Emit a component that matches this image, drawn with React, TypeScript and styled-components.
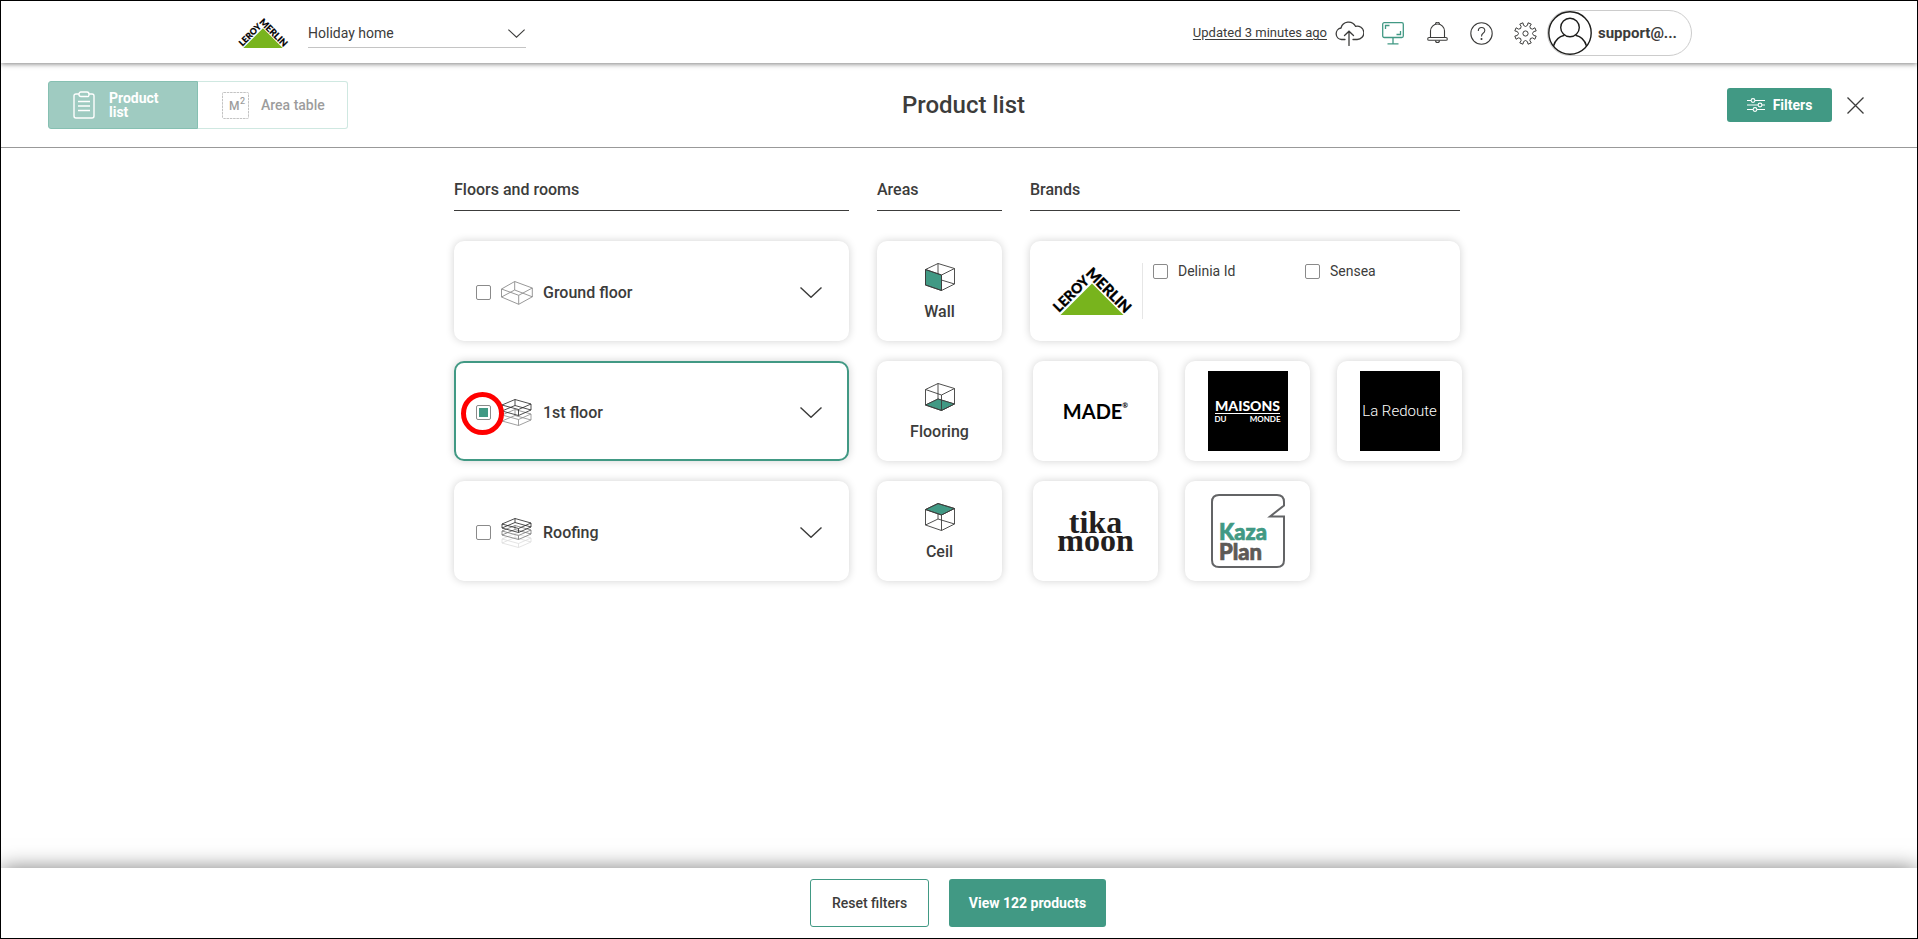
import React, { useState } from 'react';
import styled, { createGlobalStyle } from 'styled-components';

const teal = '#419984';
const ink = '#3c3c3b';
const sans = "Roboto, 'Liberation Sans', sans-serif";

const GlobalStyle = createGlobalStyle`
  *, *::before, *::after { box-sizing: border-box; }
  body { margin: 0; background: #fff; color: ${ink}; font-family: ${sans}; font-size: 16px; }
  button, select, input { font-family: inherit; color: inherit; margin: 0; }
  button { padding: 0; border: 0; background: none; cursor: pointer; }
  svg { display: block; flex: none; }
`;

const Page = styled.div`
  display: flex;
  flex-direction: column;
  min-height: 100vh;
  border: 1px solid #000;
  overflow: hidden;
`;

const TopBar = styled.header`
  height: 62px;
  box-shadow: 0 1px 5px rgba(0, 0, 0, 0.5);
`;

const TopBarInner = styled.div`
  display: flex;
  align-items: center;
  justify-content: space-between;
  max-width: 1466px;
  height: 64px;
  margin: 0 auto;
  padding-left: 12px;
`;

const TopGroup = styled.div`
  display: flex;
  align-items: center;
`;

const ProjectPicker = styled.label`
  position: relative;
  display: block;
  width: 218px;
  margin-left: 20px;

  svg { position: absolute; right: 1px; top: 11px; pointer-events: none; }
`;

const ProjectSelect = styled.select`
  appearance: none;
  display: block;
  width: 100%;
  height: 30px;
  padding: 0;
  border: 0;
  border-bottom: 1px solid #c4c4c4;
  border-radius: 0;
  background: none;
  font-size: 14px;
`;

const SyncLink = styled.a`
  color: ${ink};
  font-size: 13px;
  line-height: 16px;
  text-underline-offset: 2px;
`;

const IconButton = styled.button`
  display: flex;
  align-items: center;
  justify-content: center;
  width: 44px;
  height: 44px;
`;

const UserPill = styled.button`
  display: flex;
  align-items: center;
  gap: 6px;
  width: 145px;
  height: 46px;
  border: 1px solid #ccc;
  border-radius: 23px;
  font-size: 15px;
  font-weight: 700;
`;

const SubBar = styled.div`
  display: grid;
  grid-template-columns: 1fr auto 1fr;
  align-items: center;
  height: 85px;
  padding: 0 38px 0 47px;
  border-bottom: 1px solid #999;
`;

const Tabs = styled.div`
  display: grid;
  grid-template-columns: 1fr 1fr;
  width: 300px;
  height: 48px;
  opacity: 0.5;
`;

const Tab = styled.button<{ $active?: boolean }>`
  display: flex;
  align-items: center;
  gap: ${(p) => (p.$active ? 14 : 12)}px;
  padding-left: 24px;
  border: 1px solid ${(p) => (p.$active ? '#0f8268' : '#a0d2c5')};
  border-radius: ${(p) => (p.$active ? '3px 0 0 3px' : '0 3px 3px 0')};
  border-left-width: ${(p) => (p.$active ? 1 : 0)}px;
  background: ${(p) => (p.$active ? teal : '#fff')};
  color: ${(p) => (p.$active ? '#fff' : ink)};
  font-size: 14px;
  font-weight: ${(p) => (p.$active ? 700 : 500)};
  line-height: 14px;
  text-align: left;

  span { max-width: ${(p) => (p.$active ? 56 : 80)}px; }
`;

const Title = styled.h1`
  margin: 0;
  font-size: 24px;
  font-weight: 500;
  line-height: 32px;
`;

const SubActions = styled.div`
  display: flex;
  align-items: center;
  justify-content: flex-end;
`;

const SolidButton = styled.button<{ $small?: boolean }>`
  display: flex;
  align-items: center;
  justify-content: center;
  gap: 8px;
  width: ${(p) => (p.$small ? 105 : 157)}px;
  height: ${(p) => (p.$small ? 34 : 48)}px;
  border-radius: 3px;
  background: ${teal};
  color: #fff;
  font-size: 14px;
  font-weight: 700;
`;

const OutlineButton = styled.button`
  width: 119px;
  height: 48px;
  border: 1px solid ${teal};
  border-radius: 3px;
  background: #fff;
  font-size: 14px;
  font-weight: 500;
`;

const CloseButton = styled(IconButton)`
  width: 47px;
`;

const Content = styled.main`
  display: grid;
  grid-template-columns: minmax(0, 395px) 125px minmax(0, 430px);
  column-gap: 28px;
  justify-content: center;
  align-content: start;
  flex: 1;
  padding: 30px 4px 30px 0;
`;

const Column = styled.section`
  display: flex;
  flex-direction: column;
  gap: 20px;
`;

const ColumnTitle = styled.h2`
  margin: 0 0 10px;
  padding-bottom: 9px;
  border-bottom: 1px solid ${ink};
  font-size: 16px;
  font-weight: 500;
  line-height: 23px;
`;

const Card = styled.div<{ $selected?: boolean }>`
  position: relative;
  display: flex;
  align-items: center;
  height: 100px;
  border: 2px solid ${(p) => (p.$selected ? teal : '#fff')};
  border-radius: 10px;
  background: #fff;
  box-shadow: 0 0 8px rgba(0, 0, 0, 0.18);
`;

const FloorCard = styled(Card)`
  justify-content: space-between;
  padding: 3px 14px 0 20px;
`;

const FloorLabel = styled.label`
  display: flex;
  align-items: center;
  gap: 10px;
  font-weight: 500;
  line-height: 24px;
`;

const Checkbox = styled.input.attrs({ type: 'checkbox' })`
  appearance: none;
  flex: none;
  width: 15px;
  height: 15px;
  padding: 2px;
  border: 1px solid #8a8a8a;
  border-radius: 2px;
  background: #fff;

  &:checked {
    background: ${teal} content-box;
  }
`;

const Highlight = styled.div`
  position: absolute;
  left: 5px;
  top: 29px;
  width: 43px;
  height: 43px;
  border: 5px solid #f00;
  border-radius: 50%;
  pointer-events: none;
`;

const AreaCard = styled(Card).attrs({ as: 'button' })`
  flex-direction: column;
  gap: 9px;
  padding-top: 20px;
  font-size: 16px;
  font-weight: 500;
  line-height: 24px;
`;

const OwnBrandCard = styled(Card)`
  padding: 0 20px;
`;

const OwnBrands = styled.div`
  display: grid;
  grid-template-columns: 152px 1fr;
  flex: 1;
  align-items: start;
  height: 56px;
  margin-left: 10px;
  padding-left: 10px;
  border-left: 1px solid #e6e6e6;

  label { display: flex; align-items: center; gap: 10px; font-size: 14px; line-height: 16px; }
`;

const BrandGrid = styled.div`
  display: grid;
  grid-template-columns: repeat(3, 125px);
  gap: 20px 27px;
  margin-left: 3px;
`;

const BrandCard = styled(Card).attrs({ as: 'button' })`
  justify-content: center;
`;

const MadeMark = styled.span`
  display: flex;
  color: #000;
  font: 700 20px/24px Lato, sans-serif;

  sup { font-size: 7px; line-height: 12px; }
`;

const BlackSquare = styled.span`
  display: flex;
  flex-direction: column;
  align-items: center;
  justify-content: center;
  width: 80px;
  height: 80px;
  background: #000;
  color: #fff;
`;

const MaisonsTop = styled.span`
  border-bottom: 1px solid #fff;
  font: 900 14px/15px Lato, sans-serif;
`;

const MaisonsBottom = styled.span`
  display: flex;
  justify-content: space-between;
  width: 66px;
  font: 700 8px/10px Lato, sans-serif;
`;

const RedouteMark = styled.span`
  font: 300 15px/20px Roboto, sans-serif;
`;

const TikaMark = styled.span`
  color: #231f20;
  font: 700 32px/18px 'Liberation Serif', serif;
  text-align: center;
  white-space: pre-line;
`;

const Footer = styled.footer`
  display: flex;
  align-items: center;
  justify-content: center;
  gap: 20px;
  height: 70px;
  padding-right: 2px;
  background: #fff;
  box-shadow: 0 0 20px rgba(0, 0, 0, 0.5);
`;

const Chevron = ({ width, height, color = ink }: { width: number; height: number; color?: string }) => (
  <svg width={width} height={height} viewBox="0 0 22 11" fill="none" stroke={color} strokeWidth="1.4" aria-hidden>
    <path d="M.5.5 11 10.3 21.5.5" />
  </svg>
);

const LeroyMerlin = ({ width }: { width: number }) => (
  <svg width={width} height={(width * 48) / 80} viewBox="0 0 80 48" overflow="visible" role="img" aria-label="Leroy Merlin">
    <path d="M8.500 48 40 16.500 71.500 48Z" fill="#78b41d" />
    <g fontFamily="Lato, sans-serif" fontWeight="900" fontSize="14" fill="#000" stroke="#000" strokeWidth=".3">
      <text transform="translate(7 46) rotate(-45)">LEROY</text>
      <text transform="translate(33 7) rotate(45)" fontSize="15">MERLIN</text>
    </g>
  </svg>
);

type StoreyProps = { y: number; drop: number; color: string };

const Storey = ({ y, drop, color }: StoreyProps) => (
  <g transform={`translate(1 ${y})`} stroke={color}>
    <path d="M0 6 13 .5 29 5 16.500 10.500Z" />
    <path d={`M0 ${6 + drop} 13 ${0.5 + drop} 29 ${5 + drop} 16.500 ${10.5 + drop}Z`} />
    <path d={`M0 6v${drop}M13 .5v${drop}M29 5v${drop}M16.500 10.500v${drop}`} />
  </g>
);

const floorIcons: Record<string, React.ReactNode> = {
  ground: (
    <svg width="32" height="24" viewBox="0 0 32 24" fill="none" stroke="#8c8c8c" strokeWidth=".9">
      <path d="M.5 8 13.700.5 31.300 7 17.700 14.300ZM.5 16 13.700 9 31.300 15.800 17.700 23.300ZM.5 8v8M13.700.5V9M31.300 7v9M17.700 14.300v9" />
    </svg>
  ),
  first: (
    <svg width="32" height="28" viewBox="0 0 32 28" fill="none" strokeWidth=".8">
      <Storey y={10} drop={6} color="#888" />
      <Storey y={0} drop={6} color="#222" />
    </svg>
  ),
  roof: (
    <svg width="32" height="30" viewBox="0 0 32 30" fill="none" strokeWidth=".8">
      <Storey y={15} drop={4} color="#ddd" />
      <Storey y={7} drop={4} color="#777" />
      <Storey y={0} drop={4} color="#222" />
    </svg>
  ),
};

const cubeFaces: Record<string, string> = {
  Wall: 'M.5 6.500 16.500 12v15.500L.5 22Z',
  Flooring: 'M.5 22 13 16 29.500 21 16.500 27.500Z',
  Ceil: 'M.5 6.500 13 .5 29.500 5.500 16.500 12Z',
};

const Cube = ({ face }: { face: string }) => (
  <svg width="30" height="28" viewBox="0 0 30 28" fill="none" stroke={ink} strokeWidth=".9" aria-hidden>
    <path d="M.5 22 13 16 29.500 21M13 .5V16" />
    <path d={cubeFaces[face]} fill={teal} />
    <path d="M.5 6.500 13 .5 29.500 5.500 16.500 12ZM.5 6.500V22L16.500 27.500 29.500 21V5.500M16.500 12v15.500" />
  </svg>
);

const KazaPlan = () => (
  <svg width="74" height="74" viewBox="0 0 74 74" role="img" aria-label="Kaza Plan">
    <path
      d="M73 11.500V8Q73 1 66 1H8Q1 1 1 8v58q0 7 7 7h58q7 0 7-7V22.500H59Z"
      fill="none"
      stroke="#636466"
      strokeWidth="2"
    />
    <g fontFamily="Lato, sans-serif" fontWeight="900" fontSize="22" strokeWidth=".7">
      <text x="8" y="46" fill={teal} stroke={teal}>Kaza</text>
      <text x="8" y="66" fill="#5d5a57" stroke="#5d5a57">Plan</text>
    </g>
  </svg>
);

const ClipboardIcon = () => (
  <svg width="22" height="28" viewBox="0 0 22 28" fill="none" stroke="#fff" strokeWidth="1.400" aria-hidden>
    <path d="M6 3H3Q1 3 1 5v20q0 2 2 2h16q2 0 2-2V5q0-2-2-2h-3" />
    <path d="M6 3.500Q6 1 8 1h6q2 0 2 2.500T14 5.500H8Q6 5.500 6 3.500ZM5 10.500h12M5 15h12M5 19.500h12" />
  </svg>
);

const AreaIcon = () => (
  <svg width="27" height="27" viewBox="0 0 27 27" fill="none" aria-hidden>
    <rect x=".5" y=".5" width="26" height="26" rx="1" stroke="#888" strokeDasharray="2.500 .8" />
    <g fontFamily="Roboto, sans-serif" fill={ink}>
      <text x="7" y="18" fontSize="12" fontWeight="500">M</text>
      <text x="18" y="12" fontSize="9">2</text>
    </g>
  </svg>
);

const CloudIcon = () => (
  <svg width="29" height="26" viewBox="0 0 29 26" fill="none" stroke={ink} strokeWidth="1.300" strokeLinecap="round" aria-hidden>
    <path d="M10 19.500H6.500A5.800 5.800 0 0 1 6 8 7.800 7.800 0 0 1 20.500 6.300 6.700 6.700 0 1 1 22 19.500h-4" />
    <path d="M14 25.500V11.500M9.500 15.500 14 11.200l4.500 4.300" />
  </svg>
);

const MonitorIcon = () => (
  <svg width="22" height="23" viewBox="0 0 22 23" fill="none" stroke={teal} strokeWidth="1.300" aria-hidden>
    <rect x=".7" y=".7" width="20.600" height="14.800" rx="1.500" />
    <path d="M3.500 7V3.500H7.500M18.500 9v3.500H14.500M11 15.500v6M5.500 21.800h11" />
  </svg>
);

const BellIcon = () => (
  <svg width="21" height="22" viewBox="0 0 21 22" fill="none" stroke={ink} strokeWidth="1.100" aria-hidden>
    <path d="M3.500 15.500V9a7 7 0 0 1 14 0v6.500M8.500 2.300a2 2 0 0 1 4 0M8.500 18.500a2 2 0 0 0 4 0" />
    <rect x=".7" y="15.500" width="19.600" height="2.800" rx="1.400" />
  </svg>
);

const HelpIcon = () => (
  <svg width="23" height="23" viewBox="0 0 23 23" fill="none" stroke={ink} strokeWidth="1.100" aria-hidden>
    <circle cx="11.500" cy="11.500" r="10.700" />
    <path d="M8.300 9q0-3.500 3.300-3.500T14.800 8.600q0 1.600-1.700 2.700-1.600 1.100-1.600 3.200" />
    <circle cx="11.500" cy="17" r=".5" fill={ink} />
  </svg>
);

const gearPath = (() => {
  const parts: string[] = [];
  const point = (r: number, deg: number) => {
    const a = (deg * Math.PI) / 180;
    return `${(11.5 + r * Math.cos(a)).toFixed(2)} ${(11.5 + r * Math.sin(a)).toFixed(2)}`;
  };
  for (let i = 0; i < 8; i += 1) {
    const a = i * 45 + 22.5;
    parts.push(`${i ? 'L' : 'M'}${point(11, a - 9)}L${point(11, a + 9)}L${point(8.4, a + 9)}`);
    parts.push(`Q${point(5.8, a + 22.5)} ${point(8.4, a + 36)}`);
  }
  return `${parts.join('')}Z`;
})();

const GearIcon = () => (
  <svg width="23" height="23" viewBox="0 0 23 23" fill="none" stroke={ink} strokeWidth="1" strokeLinejoin="round" aria-hidden>
    <path d={gearPath} />
    <circle cx="11.500" cy="11.500" r="2.600" />
  </svg>
);

const AvatarIcon = () => (
  <svg width="44" height="44" viewBox="0 0 44 44" fill="none" stroke="#1d1d1b" strokeWidth="1.400" aria-hidden>
    <circle cx="22" cy="22" r="21.200" />
    <circle cx="22" cy="16.500" r="9.300" />
    <path d="M5.500 35Q8 26 16.500 24.200M38.500 35Q36 26 27.500 24.200" />
  </svg>
);

const SlidersIcon = () => (
  <svg width="18" height="14" viewBox="0 0 18 14" fill="none" stroke="#fff" strokeWidth="1.100" aria-hidden>
    <path d="M0 2.500h4M8 2.500h10M0 7h11M15 7h3M0 11.500h6M10 11.500h8" />
    <circle cx="6" cy="2.500" r="1.900" />
    <circle cx="13" cy="7" r="1.900" />
    <circle cx="8" cy="11.500" r="1.900" />
  </svg>
);

const CloseIcon = () => (
  <svg width="17" height="17" viewBox="0 0 17 17" stroke={ink} strokeWidth="1.300" aria-hidden>
    <path d="M.5.5l16 16M16.500.5l-16 16" />
  </svg>
);

const floors = [
  { id: 'ground', name: 'Ground floor' },
  { id: 'first', name: '1st floor' },
  { id: 'roof', name: 'Roofing' },
];

export default function App() {
  const [selected, setSelected] = useState<string[]>(['first']);
  const toggle = (id: string) =>
    setSelected((now) => (now.includes(id) ? now.filter((x) => x !== id) : [...now, id]));

  return (
    <Page>
      <GlobalStyle />
      <TopBar>
        <TopBarInner>
          <TopGroup>
            <LeroyMerlin width={50} />
            <ProjectPicker>
              <ProjectSelect aria-label="Project">
                <option>Holiday home</option>
              </ProjectSelect>
              <Chevron width={17} height={9} />
            </ProjectPicker>
          </TopGroup>
          <TopGroup>
            <SyncLink href="#sync">Updated 3 minutes ago</SyncLink>
            <IconButton aria-label="Upload"><CloudIcon /></IconButton>
            <IconButton aria-label="Present"><MonitorIcon /></IconButton>
            <IconButton aria-label="Notifications"><BellIcon /></IconButton>
            <IconButton aria-label="Help"><HelpIcon /></IconButton>
            <IconButton aria-label="Settings"><GearIcon /></IconButton>
            <UserPill>
              <AvatarIcon />
              support@...
            </UserPill>
          </TopGroup>
        </TopBarInner>
      </TopBar>

      <SubBar>
        <Tabs>
          <Tab $active><ClipboardIcon /><span>Product list</span></Tab>
          <Tab><AreaIcon /><span>Area table</span></Tab>
        </Tabs>
        <Title>Product list</Title>
        <SubActions>
          <SolidButton $small><SlidersIcon />Filters</SolidButton>
          <CloseButton aria-label="Close"><CloseIcon /></CloseButton>
        </SubActions>
      </SubBar>

      <Content>
        <Column>
          <ColumnTitle>Floors and rooms</ColumnTitle>
          {floors.map((floor) => (
            <FloorCard key={floor.id} $selected={selected.includes(floor.id)}>
              <FloorLabel>
                <Checkbox checked={selected.includes(floor.id)} onChange={() => toggle(floor.id)} />
                {floorIcons[floor.id]}
                {floor.name}
              </FloorLabel>
              <IconButton aria-label={`Show rooms of ${floor.name}`}>
                <Chevron width={22} height={11} />
              </IconButton>
              {floor.id === 'first' && <Highlight />}
            </FloorCard>
          ))}
        </Column>

        <Column>
          <ColumnTitle>Areas</ColumnTitle>
          {Object.keys(cubeFaces).map((area) => (
            <AreaCard key={area}>
              <Cube face={area} />
              {area}
            </AreaCard>
          ))}
        </Column>

        <Column>
          <ColumnTitle>Brands</ColumnTitle>
          <OwnBrandCard>
            <LeroyMerlin width={80} />
            <OwnBrands>
              <label><Checkbox />Delinia Id</label>
              <label><Checkbox />Sensea</label>
            </OwnBrands>
          </OwnBrandCard>
          <BrandGrid>
            <BrandCard>
              <MadeMark>MADE<sup>®</sup></MadeMark>
            </BrandCard>
            <BrandCard>
              <BlackSquare>
                <MaisonsTop>MAISONS</MaisonsTop>
                <MaisonsBottom><span>DU</span><span>MONDE</span></MaisonsBottom>
              </BlackSquare>
            </BrandCard>
            <BrandCard>
              <BlackSquare>
                <RedouteMark>La Redoute</RedouteMark>
              </BlackSquare>
            </BrandCard>
            <BrandCard>
              <TikaMark>{'tika\nmoon'}</TikaMark>
            </BrandCard>
            <BrandCard><KazaPlan /></BrandCard>
          </BrandGrid>
        </Column>
      </Content>

      <Footer>
        <OutlineButton>Reset filters</OutlineButton>
        <SolidButton>View 122 products</SolidButton>
      </Footer>
    </Page>
  );
}
